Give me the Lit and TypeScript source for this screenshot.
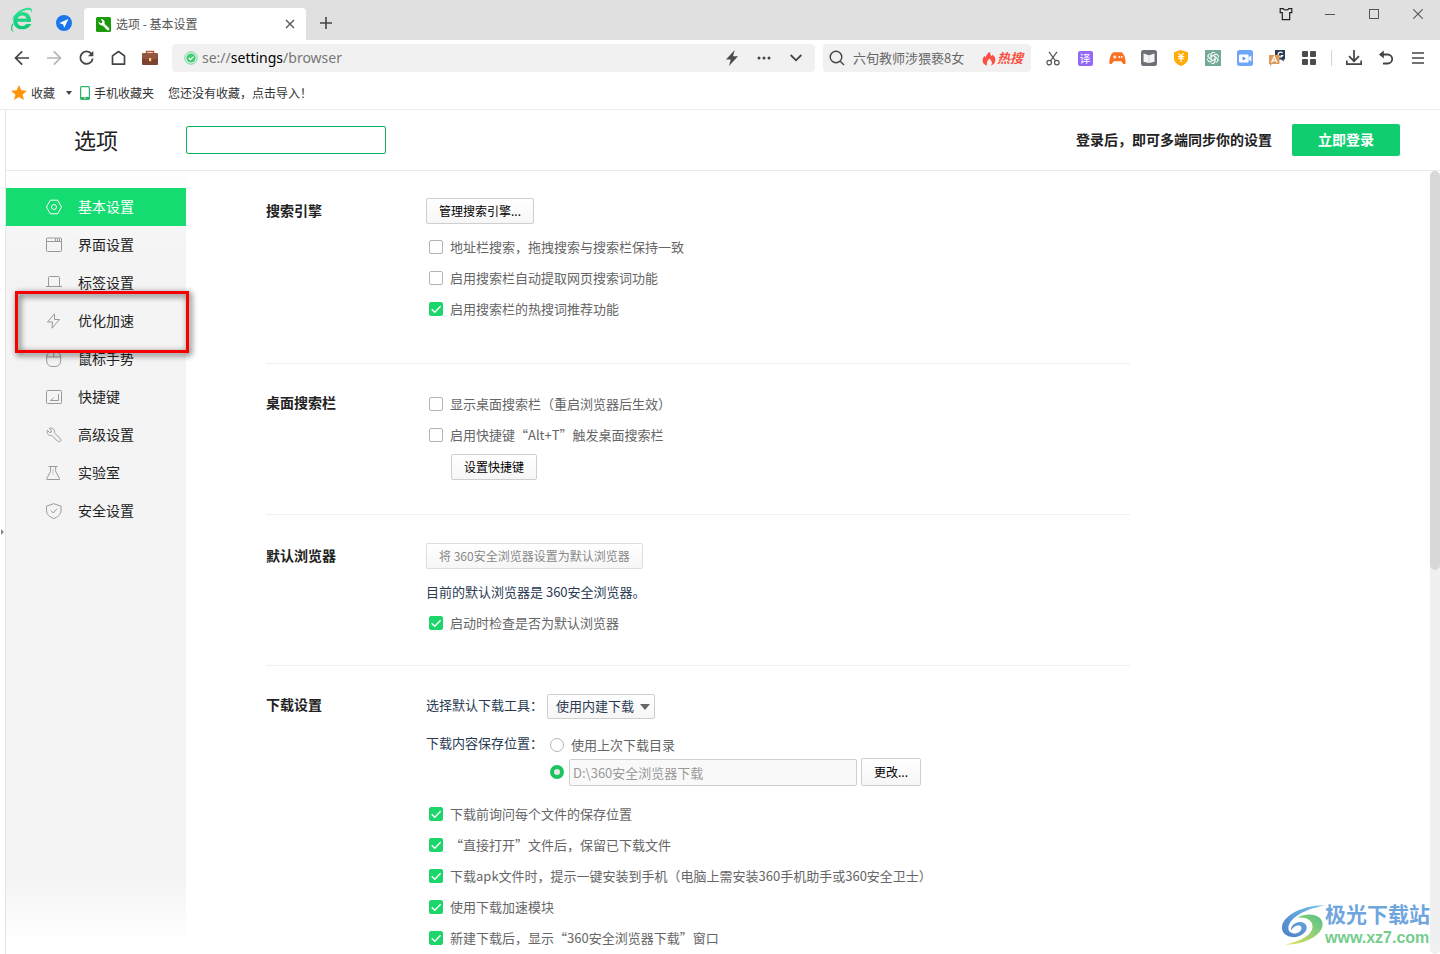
import { LitElement, html, css, svg, nothing } from "lit";
import { customElement, property } from "lit/decorators.js";
import { classMap } from "lit/directives/class-map.js";

const icon = (w: number, h: number, body: unknown, box = `0 0 ${w} ${h}`) =>
  html`<svg width=${w} height=${h} viewBox=${box} fill="none" aria-hidden="true">${body}</svg>`;

const logo = icon(24, 26, svg`
  <defs><linearGradient id="lg" x1="0" y1="0" x2="0" y2="1"><stop offset="0" stop-color="#25dd8b"/><stop offset="1" stop-color="#0cc877"/></linearGradient></defs>
  <path d="M20.800 13.200H6.600" stroke="#1bd47f" stroke-width="3.200"/>
  <path d="M20.900 14.800C21.600 8.600 17.600 5 12.200 5C6.800 5 3.300 8.800 3.300 13.700C3.300 18.800 7 22.300 12.200 22.300C16.400 22.300 19.800 20.300 21.300 17H16.400C15.400 18.300 14 18.900 12.300 18.900C9.400 18.900 7.300 16.900 7.100 13.900C7.200 10.600 9.300 8.500 12.300 8.500C15 8.500 16.700 10.200 16.900 12.500L17 14.800Z" fill="url(#lg)"/>
  <path d="M1.400 13.200C4 7 11 1.300 18 .8C21.500 .6 22.900 2.600 21.600 6.200C21.700 3.600 20.500 2.300 17.800 2.700C11.500 3.600 5.500 8 1.400 13.200Z" fill="#2bdf92"/>
  <path d="M2.300 16.500C.3 20.800.6 24.500 4 24.900C1.500 22.900 1.900 19.700 3.500 17Z" fill="#0cc877"/>`);

const plane = icon(16, 16, svg`<circle cx="8" cy="8" r="8" fill="#1b76ec"/><path d="M12.400 4L3.300 7.900L7 9.200L8.300 12.800Z" fill="#fff"/>`);

const wrenchTab = icon(15, 15, svg`<rect width="15" height="15" rx="1.500" fill="#1b9a0b"/>
  <path d="M7.300 7.300L12 12" stroke="#fff" stroke-width="2.600" stroke-linecap="round"/>
  <path d="M2.600 4.500C2.300 7.200 4.600 9 7 8.200L8.600 6.600C9.300 4.300 7.300 2 4.700 2.400L6.400 4.300L5.900 5.900L4.400 6.300Z" fill="#fff"/>`);

const close = icon(10, 10, svg`<path d="M1 1L9 9M9 1L1 9" stroke="#555" stroke-width="1.400"/>`);
const plus = icon(12, 12, svg`<path d="M6 0V12M0 6H12" stroke="#444" stroke-width="1.600"/>`);
const shirt = icon(14, 14, svg`<path d="M1.200 1.700H4.300C5 3.300 9 3.300 9.700 1.700H12.800V5.600H10.700V12.700H3.300V5.600H1.200Z" stroke="#222" stroke-width="1.200"/>`);
const minimise = icon(10, 10, svg`<path d="M0 5.500H10" stroke="#555"/>`);
const maximise = icon(10, 10, svg`<rect x=".5" y=".5" width="9" height="9" stroke="#555"/>`);
const winClose = icon(10, 10, svg`<path d="M.3 .3L9.700 9.700M9.700 .3L.3 9.700" stroke="#555" stroke-width="1.100"/>`);

const back = icon(16, 16, svg`<path d="M15 8H2M8.200 1.300L1.500 8L8.200 14.700" stroke="#444" stroke-width="1.700"/>`);
const forward = icon(16, 16, svg`<path d="M1 8H14M7.800 1.300L14.500 8L7.800 14.700" stroke="#b5b5b5" stroke-width="1.700"/>`);
const reload = icon(16, 16, svg`<path d="M13.500 3.900A6.200 6.200 0 1 0 14.700 8.600" stroke="#444" stroke-width="1.800"/><path d="M15.300 1V6.300H9.900Z" fill="#444"/>`);
const home = icon(16, 16, svg`<path d="M2.500 14.200V5.900L8.500 1.500L14.500 5.900V14.200Z" stroke="#444" stroke-width="1.700" stroke-linejoin="round"/>`);
const briefcase = icon(18, 16, svg`<path d="M5.500 4V1.500H12.500V4" stroke="#b5583a" stroke-width="1.500"/>
  <rect x="1" y="3.200" width="16" height="11.800" rx="1" fill="#7e4330"/><path d="M1 4.200Q1 3.200 2 3.200H16Q17 3.200 17 4.200V8.400Q9 10.400 1 8.400Z" fill="#95543d"/><rect x="8" y="8" width="2.200" height="3.200" fill="#f3d774"/>`);
const secure = icon(14, 14, svg`<circle cx="7" cy="7" r="6.200" stroke="#6fd596" stroke-width="1"/><circle cx="7" cy="7" r="4.600" fill="#3fce76"/><path d="M4.700 7L6.500 8.700L9.500 5.600" stroke="#fff" stroke-width="1.300"/>`);
const bolt = icon(14, 16, svg`<path d="M9.700 0L1 9.500H5.800L4 16L13 6.200H8Z" fill="#4b4b4b"/>`);
const dots = icon(14, 4, svg`<circle cx="2" cy="2" r="1.500" fill="#444"/><circle cx="7" cy="2" r="1.500" fill="#444"/><circle cx="12" cy="2" r="1.500" fill="#444"/>`);
const chevron = icon(12, 8, svg`<path d="M.7 1L6 6.300L11.300 1" stroke="#444" stroke-width="1.800"/>`);
const magnifier = icon(16, 16, svg`<circle cx="7" cy="7" r="5.800" stroke="#444" stroke-width="1.400"/><path d="M11.200 11.200L15 15" stroke="#444" stroke-width="1.400"/>`);
const flame = icon(14, 15, svg`<path d="M5.200 14.500C1.800 13.900.3 11.600.6 8.800C.8 7 1.800 5.900 2.700 4.800C2.800 5.700 3.100 6.200 3.700 6.500C4.200 4 5.800 1.800 8.200 .7C7.800 2.900 8.500 4 9.700 5.100C10.200 4.800 10.600 4.300 10.700 3.600C12.600 5.500 13.500 7.300 13.300 9.500C13.100 12.100 11.500 14 8.900 14.500C10.200 13 10.300 11.400 9.300 10C8.900 9.300 8.100 8.700 8 7.500C6 8.600 4.300 11.100 5.200 14.500Z" fill="#fb5144"/>`);

const scissors = icon(14, 15, svg`<g stroke="#555" stroke-width="1.200"><circle cx="3.200" cy="11.600" r="2.300"/><circle cx="10.800" cy="11.600" r="2.300"/><path d="M3 .8L9.500 9.800M11 .8L4.500 9.800"/></g>`);
const gamepad = icon(17, 14, svg`<path d="M4.500 1.200H12.500C15.400 2.700 16.900 8.500 16.600 12.600C15.200 14 13.300 12.300 12.300 10.200H4.700C3.700 12.300 1.800 14 .4 12.600C.1 8.500 1.600 2.700 4.500 1.200Z" fill="#fa6f20"/><path d="M5.800 4.200V7.800M4 6H7.600" stroke="#fff" stroke-width="1.100"/><circle cx="10.300" cy="6" r=".9" fill="#fff"/><circle cx="12.700" cy="6" r=".9" fill="#fff"/>`);
const book = icon(16, 16, svg`<rect width="16" height="16" rx="2.500" fill="#6e7077"/><path d="M2.500 3.500L7.900 5.200V13L2.500 11.800ZM8.100 5.200L13.500 3.500V11.800L8.100 13Z" fill="#f5f5f5"/>`);
const yenShield = icon(16, 16, svg`<path d="M8 0L15 2.300V8.500C15 12 11.600 14.500 8 16C4.400 14.500 1 12 1 8.500V2.300Z" fill="#ffab08"/><path d="M5.500 3.300L8 6M10.500 3.300L8 6M8 5.600V12M4.800 6.600H11.200M5.400 9L8 8.200L10.600 9" stroke="#fff" stroke-width="1.200"/>`);
const knot = icon(16, 16, svg`<rect width="16" height="16" fill="#74a99a"/><g stroke="#fff" stroke-width=".8">
  ${[0, 60, 120, 180, 240, 300].map((a) => svg`<path transform="rotate(${a} 8 8)" d="M5.800 9.300V4.700A2.500 2.500 0 0 1 10.300 3.300M7.200 6.400L10 4.800A2.500 2.500 0 0 1 13.300 5.800"/>`)}</g>`);
const video = icon(16, 16, svg`<rect width="16" height="16" rx="2.500" fill="#6ea6fb"/><rect x="2" y="4.500" width="9.600" height="8" rx="1.200" fill="#fff"/><path d="M11.500 7.600L14.300 5.500V11.500L11.500 9.500Z" fill="#fff"/><path d="M5.600 6.500L9 8.500L5.600 10.500Z" fill="#4e8bf5"/>`);
const translate = icon(16, 16, svg`<path d="M6 0H16V9.500H14.500L15 11.500L12 9.500H6Z" fill="#2b3c55"/><path d="M13.600 3.300A2.400 2.400 0 1 0 13.700 5.500H11.700" stroke="#fff" stroke-width="1.200"/><path d="M0 5H10.500V14H3L1 16V14H0Z" fill="#dc9b5c"/><path d="M2.500 12.500L5.300 6.500L8 12.500M3.600 10.600H7" stroke="#fff" stroke-width="1.200"/>`);
const apps = icon(14, 14, svg`<g fill="#4b4b4b"><rect width="6" height="6" rx="1"/><rect x="8" width="6" height="6" rx="1"/><rect y="8" width="6" height="6" rx="1"/><rect x="8" y="8" width="6" height="6" rx="1"/></g>`);
const download = icon(16, 16, svg`<path d="M8 0V11M3 6.200L8 11.200L13 6.200M.8 10.500V14.200H15.200V10.500" stroke="#444" stroke-width="1.700"/>`);
const undo = icon(16, 16, svg`<path d="M2 4.500H9.700A4.500 4.500 0 0 1 9.700 13.500H5" stroke="#444" stroke-width="1.800"/><path d="M1 4.500L5.800 .6V8.400Z" fill="#444"/>`);
const menu = icon(12, 12, svg`<path d="M0 1H12M0 6H12M0 11H12" stroke="#444" stroke-width="1.700"/>`);

const star = icon(16, 15, svg`<path d="M8 0L10.300 5.300L16 5.700L11.600 9.400L13 15L8 12L3 15L4.400 9.400L0 5.700L5.700 5.300Z" fill="#ff9408"/>`);
const caret = icon(6, 4, svg`<path d="M0 0H6L3 4Z" fill="#444"/>`);
const phone = icon(10, 14, svg`<rect x=".6" y=".6" width="8.800" height="12.800" rx="1" stroke="#2fb56a" stroke-width="1.200"/><path d="M1 11H9V13H1Z" fill="#2fb56a"/><rect x="4.200" y="11.600" width="1.600" height="1" fill="#fff"/>`);

const outline = (body: unknown) => icon(16, 16, svg`<g stroke="currentColor">${body}</g>`);
const NAV = [
  { text: "基本设置", icon: outline(svg`<path d="M4.300 1.200H11.700L15.500 8L11.700 14.800H4.300L.5 8Z"/><circle cx="8" cy="8" r="2.500"/>`) },
  { text: "界面设置", icon: outline(svg`<rect x=".5" y="1" width="15" height="13.500" rx="1"/><path d="M.5 4.500H15.500M9.500 1.500V4M11.500 1.500V4M13.500 1.500V4"/>`) },
  { text: "标签设置", icon: outline(svg`<path d="M0 11.500H16M2.500 11.500V2.500Q2.500 1.500 3.500 1.500H12.500Q13.500 1.500 13.500 2.500V11.500"/>`) },
  { text: "优化加速", icon: outline(svg`<path d="M8.500 .8L1.500 9H6.500L6 15.200L13.500 6.500H8.500Z" stroke-linejoin="round"/>`), marked: true },
  { text: "鼠标手势", icon: outline(svg`<rect x=".7" y=".5" width="14" height="15" rx="5.500"/><path d="M.7 6H14.700M7.700 .5V6"/>`) },
  { text: "快捷键", icon: outline(svg`<rect x=".5" y="1.500" width="15" height="13" rx="1"/><path d="M12.500 5V11.500H4.500L7.500 9"/>`) },
  { text: "高级设置", icon: outline(svg`<path d="M3.200 1.400L5.500 3.700L5.200 5.200L3.700 5.500L1.300 3.200C.2 6.500 2.500 9.200 5.800 8.400L11.500 14.100C12.400 15 13.700 14.900 14.400 14.200C15.100 13.500 15.100 12.300 14.200 11.500L8.400 5.800C9.200 2.500 6.500.3 3.200 1.400Z"/>`) },
  { text: "实验室", icon: outline(svg`<path d="M2.500 1.500H11.500M4.500 1.500V6.500L.8 13.500V14.500H13.500V13.500L9.700 6.500V1.500"/><path d="M7 4.500V9.500" stroke-dasharray="1 1"/>`) },
  { text: "安全设置", icon: outline(svg`<path d="M7.700 .7L15 3.200V7.500C15 11.500 11.500 14.300 7.700 15.500C4 14.300.5 11.500.5 7.500V3.200Z"/><path d="M4.800 7.500L7.200 10L11 5.800"/>`) },
];

@customElement("browser-chrome")
class BrowserChrome extends LitElement {
  static styles = css`
    :host { display: block; }
    svg { display: block; flex: none; }
    button { border: 0; padding: 0; background: none; font: inherit; color: inherit; }
    .tabs { display: flex; height: 40px; background: #e0e0e0; font-size: 12px; color: #555; }
    .brand { width: 24px; padding: 7px 10px; }
    .quick { width: 40px; display: grid; place-items: center; padding-top: 6px; }
    .tab { width: 222px; margin-top: 8px; box-sizing: border-box; padding: 0 11px 0 12px; display: flex; align-items: center; gap: 5px; background: #fff; border-radius: 4px 4px 0 0; }
    .tab .name { flex: 1; padding-bottom: 2px; }
    .plus { width: 40px; display: grid; place-items: center; padding-top: 6px; }
    .window { margin-left: auto; display: flex; height: 28px; }
    .window button { width: 44px; display: grid; place-items: center; }
    .bar { display: flex; align-items: center; height: 36px; padding: 0 6px; }
    .tool { width: 32px; height: 28px; display: grid; place-items: center; flex: none; }
    .address { flex: 1; min-width: 0; height: 28px; margin: 0 8px 0 6px; padding: 0 3px 0 12px; display: flex; align-items: center; background: #f1f1f1; border-radius: 4px; box-sizing: border-box; }
    .url { flex: 1; padding-left: 4px; font: 14px/20px "Noto Sans", "Noto Sans CJK SC", sans-serif; color: #777; }
    .url b { font-weight: 400; color: #000; }
    .search { width: 208px; height: 28px; margin-right: 6px; padding: 0 8px 0 6px; display: flex; align-items: center; gap: 8px; background: #f1f1f1; border-radius: 4px; box-sizing: border-box; }
    .search input { flex: 1; min-width: 0; border: 0; padding: 0 0 2px; background: none; outline: 0; font: inherit; font-size: 13px; color: #666; }
    .search input::placeholder { color: #666; opacity: 1; }
    .hot { display: flex; align-items: center; gap: 1px; color: #fb5144; font-size: 13px; font-weight: 700; font-style: italic; }
    .hot span { padding-bottom: 2px; }
    .yi { width: 15px; height: 15px; border-radius: 2px; background: #9469f8; color: #fff; font-size: 11px; line-height: 15px; text-align: center; }
    .sep { width: 1px; height: 16px; margin: 0 6px; background: #d5d5d5; }
    .marks { display: flex; align-items: center; height: 33px; padding-left: 11px; font-size: 12px; color: #333; border-bottom: 1px solid #ececec; }
    .marks button { display: flex; align-items: center; gap: 4px; }
    .marks .fav { margin-right: 11px; }
    .marks .mobile { margin: 0 14px 0 8px; }
  `;

  tool(label: string, glyph: unknown) {
    return html`<button class="tool" aria-label=${label}>${glyph}</button>`;
  }

  render() {
    return html`
      <div class="tabs">
        <div class="brand">${logo}</div>
        <button class="quick" aria-label="导航">${plane}</button>
        <div class="tab">${wrenchTab}<span class="name">选项 - 基本设置</span><button aria-label="关闭标签">${close}</button></div>
        <button class="plus" aria-label="新标签">${plus}</button>
        <div class="window">
          <button aria-label="皮肤">${shirt}</button><button aria-label="最小化">${minimise}</button>
          <button aria-label="最大化">${maximise}</button><button aria-label="关闭">${winClose}</button>
        </div>
      </div>
      <div class="bar">
        ${this.tool("后退", back)}${this.tool("前进", forward)}${this.tool("刷新", reload)}${this.tool("主页", home)}${this.tool("工具箱", briefcase)}
        <div class="address">${secure}<span class="url">se://<b>settings</b>/browser</span>
          ${this.tool("极速模式", bolt)}${this.tool("更多", dots)}${this.tool("展开", chevron)}</div>
        <div class="search">${magnifier}<input aria-label="搜索" placeholder="六旬教师涉猥亵8女" /><span class="hot">${flame}<span>热搜</span></span></div>
        ${this.tool("截图", scissors)}${this.tool("翻译", html`<span class="yi">译</span>`)}${this.tool("游戏", gamepad)}${this.tool("阅读", book)}
        ${this.tool("优惠", yenShield)}${this.tool("助手", knot)}${this.tool("录屏", video)}${this.tool("双语", translate)}${this.tool("扩展", apps)}
        <span class="sep"></span>
        ${this.tool("下载", download)}${this.tool("恢复", undo)}${this.tool("菜单", menu)}
      </div>
      <div class="marks">
        <button class="fav">${star}收藏</button>${caret}
        <button class="mobile">${phone}手机收藏夹</button><button>您还没有收藏，点击导入！</button>
      </div>`;
  }
}

@customElement("settings-nav")
class SettingsNav extends LitElement {
  static styles = css`
    :host { display: block; width: 180px; padding-top: 17px; box-sizing: border-box;
      background: linear-gradient(#fff, #f4f4f4 75px, #f4f4f4 calc(100% - 76px), #fff calc(100% - 8px)); }
    ul { list-style: none; margin: 0; padding: 0; }
    li { position: relative; }
    a { display: flex; align-items: center; gap: 16px; height: 38px; padding-left: 40px; font-size: 14px; color: #222; text-decoration: none; }
    a span { padding-bottom: 2px; }
    svg { color: #999; }
    .active { background: #14dc71; color: #fff; }
    .active svg { color: #fff; }
    .mark { position: absolute; z-index: 1; inset: -11px -3px -13px 9px; border: 3px solid #f80000; filter: drop-shadow(2px 2px 3px rgba(0, 0, 0, .75)); pointer-events: none; }
  `;
  render() {
    return html`<nav><ul>${NAV.map((n, i) => html`<li>
      <a href="#" class=${classMap({ active: i === 0 })}>${n.icon}<span>${n.text}</span></a>
      ${n.marked ? html`<div class="mark"></div>` : nothing}</li>`)}</ul></nav>`;
  }
}

@customElement("check-row")
class CheckRow extends LitElement {
  @property() text = "";
  @property({ type: Boolean }) on = false;
  static styles = css`
    :host { display: block; }
    label { display: flex; align-items: center; gap: 7px; height: 31px; padding-left: 3px; font-size: 13px; color: #666; white-space: nowrap; }
    .text { padding-bottom: 1px; }
    .box { display: grid; }
    .box > * { grid-area: 1 / 1; }
    input { appearance: none; width: 14px; height: 14px; margin: 0; border: 1px solid #b4b4b4; border-radius: 2px; background: #fff; }
    input:checked { background: #1cd66c; border-color: #1cd66c; }
    svg { pointer-events: none; }
  `;
  render() {
    return html`<label><span class="box"><input type="checkbox" .checked=${this.on} />
      ${this.on ? icon(14, 14, svg`<path d="M2.700 7.200L5.800 10.200L11.600 4.200" stroke="#fff" stroke-width="1.400"/>`) : nothing}</span><span class="text">${this.text}</span></label>`;
  }
}

@customElement("app-root")
class AppRoot extends LitElement {
  static styles = css`
    :host { display: flex; flex-direction: column; height: 100vh; position: relative; overflow: hidden; background: #fff;
      font-family: "Noto Sans CJK SC", sans-serif; text-spacing-trim: space-all; }
    button, input, select { font: inherit; }
    .page { flex: 1; min-height: 0; display: flex; }
    .edge { width: 5px; flex: none; display: flex; align-items: center; border-right: 1px solid #e6e6e6; }
    .edge button { border: 0; padding: 0; background: none; display: flex; }
    .view { flex: 1; min-width: 0; display: flex; flex-direction: column; }
    .head { display: flex; align-items: center; height: 60px; padding: 0 40px 0 68px; border-bottom: 1px solid #e9e9e9; }
    h1 { margin: 0; width: 112px; padding-bottom: 2px; font-size: 22px; font-weight: 400; color: #222; }
    .find { width: 200px; height: 28px; box-sizing: border-box; border: 1px solid #0db35c; border-radius: 2px; background: #fff; padding: 0 6px; outline: 0; }
    .sync { margin-left: auto; margin-right: 20px; padding-bottom: 2px; font-size: 14px; font-weight: 700; color: #222; }
    .login { width: 108px; height: 32px; padding: 0 0 2px; border: 0; border-radius: 2px; background: #10ce70; color: #fff; font-size: 14px; font-weight: 700; }
    .body { flex: 1; min-height: 0; display: flex; }
    main { flex: 1; min-width: 0; overflow: hidden; padding-left: 80px; }
    .track { width: 10px; border-radius: 5px; background: #f0f0f0; }
    .thumb { height: 51%; border-radius: 5px; background: #d8d8d8; }
    section { max-width: 864px; display: flex; padding: 28px 0 27px; border-bottom: 1px solid #f0f0f0; }
    section.search { padding: 27px 0 39px; }
    section.desktop { padding: 24px 0 34px; }
    h2 { margin: 0; width: 160px; flex: none; font-size: 14px; line-height: 24px; font-weight: 700; color: #222; }
    .desktop h2 { line-height: 29px; }
    .download h2 { line-height: 21px; }
    .btn { display: block; height: 26px; padding: 0 12px; border: 1px solid #cfcfcf; border-radius: 2px; background: linear-gradient(#fff, #f6f6f6); font-size: 12px; line-height: 24px; color: #000; white-space: nowrap; }
    .btn:disabled { color: #888; border-color: #dedede; }
    .search .btn, .default .btn { margin-bottom: 7px; }
    .desktop .btn { margin: 4px 0 0 25px; }
    .note { margin: 0; font-size: 13px; line-height: 31px; color: #2a3b52; }
    .form { display: grid; grid-template-columns: auto 1fr; column-gap: 4px; row-gap: 13px; margin-bottom: 12px; font-size: 13px; color: #2a3b52; }
    .form .label { line-height: 22px; }
    .drop { display: grid; width: 108px; align-items: center; }
    .drop > * { grid-area: 1 / 1; }
    .drop svg { justify-self: end; margin-right: 5px; pointer-events: none; }
    select { appearance: none; height: 25px; padding: 0 8px 2px; border: 1px solid #cfcfcf; border-radius: 2px; background: linear-gradient(#fff, #f6f6f6); font-size: 13px; color: #2a3b52; }
    .radio { display: flex; align-items: center; gap: 7px; height: 26px; padding-left: 3px; color: #666; }
    .radio span { padding-bottom: 2px; }
    .radio input { appearance: none; width: 14px; height: 14px; margin: 0; border: 1px solid #b4b4b4; border-radius: 50%; background: #fff; }
    .radio input:checked { border: 4px solid #1bc45f; background: #e8e8e8; }
    .place { display: flex; align-items: center; gap: 4px; }
    .place .radio { padding-right: 1px; }
    .path { width: 288px; height: 27px; box-sizing: border-box; padding: 0 3px; border: 1px solid #cfcfcf; border-radius: 2px; background: #f9f9f9; color: #999; font-size: 13px; }
    .place .btn { height: 28px; }
    .stamp { position: absolute; right: 10px; bottom: 7px; display: flex; align-items: center; }
    .stamp div { display: flex; flex-direction: column; }
    .cn { font-size: 21px; line-height: 31px; font-weight: 700; color: #6fa6dd; }
    .en { font: 700 16px/18px "Liberation Sans", Arial, sans-serif; color: #74cd8d; }
    .stamp svg { margin-top: 4px; }
  `;

  render() {
    return html`
      <browser-chrome></browser-chrome>
      <div class="page">
        <div class="edge"><button aria-label="展开侧栏">${icon(4, 6, svg`<path d="M1 0L4 3L1 6Z" fill="#888"/>`)}</button></div>
        <div class="view">
          <header class="head">
            <h1>选项</h1><input class="find" aria-label="搜索设置" />
            <span class="sync">登录后，即可多端同步你的设置</span><button class="login">立即登录</button>
          </header>
          <div class="body">
            <settings-nav></settings-nav>
            <main>
              <section class="search"><h2>搜索引擎</h2><div>
                <button class="btn">管理搜索引擎...</button>
                <check-row text="地址栏搜索，拖拽搜索与搜索栏保持一致"></check-row>
                <check-row text="启用搜索栏自动提取网页搜索词功能"></check-row>
                <check-row on text="启用搜索栏的热搜词推荐功能"></check-row>
              </div></section>
              <section class="desktop"><h2>桌面搜索栏</h2><div>
                <check-row text="显示桌面搜索栏（重启浏览器后生效）"></check-row>
                <check-row text="启用快捷键“Alt+T”触发桌面搜索栏"></check-row>
                <button class="btn">设置快捷键</button>
              </div></section>
              <section class="default"><h2>默认浏览器</h2><div>
                <button class="btn" disabled>将 360安全浏览器设置为默认浏览器</button>
                <p class="note">目前的默认浏览器是 360安全浏览器。</p>
                <check-row on text="启动时检查是否为默认浏览器"></check-row>
              </div></section>
              <section class="download"><h2>下载设置</h2><div>
                <div class="form">
                  <label class="label" for="tool">选择默认下载工具：</label>
                  <div class="drop"><select id="tool"><option>使用内建下载</option></select>${icon(10, 6, svg`<path d="M0 0H10L5 6Z" fill="#666"/>`)}</div>
                  <span class="label">下载内容保存位置：</span>
                  <div>
                    <label class="radio"><input type="radio" name="dir" /><span>使用上次下载目录</span></label>
                    <div class="place"><span class="radio"><input type="radio" name="dir" aria-label="指定目录" checked /></span>
                      <input class="path" aria-label="下载目录" value="D:\\360安全浏览器下载" disabled /><button class="btn">更改...</button></div>
                  </div>
                </div>
                <check-row on text="下载前询问每个文件的保存位置"></check-row>
                <check-row on text="“直接打开”文件后，保留已下载文件"></check-row>
                <check-row on text="下载apk文件时，提示一键安装到手机（电脑上需安装360手机助手或360安全卫士）"></check-row>
                <check-row on text="使用下载加速模块"></check-row>
                <check-row on text="新建下载后，显示“360安全浏览器下载”窗口"></check-row>
              </div></section>
            </main>
            <div class="track"><div class="thumb"></div></div>
          </div>
        </div>
      </div>
      <div class="stamp">
        ${icon(44, 40, svg`
          <defs><linearGradient id="sb" x1="0" y1="1" x2="1" y2="0"><stop offset="0" stop-color="#4f7fc6"/><stop offset="1" stop-color="#6fc3ee"/></linearGradient>
          <linearGradient id="sg" x1="0" y1="1" x2="1" y2="0"><stop offset="0" stop-color="#e6e35a"/><stop offset="1" stop-color="#52c08a"/></linearGradient></defs>
          <path d="M44 .5C28 -.5 6 7 1.500 19C-1.500 29 8 34 17 31.500C27 28.500 29 18.500 20 17C14 16.500 9.500 21 10 25.500C12 21.500 16.500 19.500 19.500 21C22.500 24 18 29 12.500 28.500C5 27.500 6 19 13 13C21 6.500 32 2.500 44 .5Z" fill="url(#sb)"/>
          <path d="M16 12.500C27 7 40 9.500 41.500 18C43 29 25 40 4 39.500C20 36.500 31 29.500 31.500 22.500C32 14.500 25 12 16 12.500Z" fill="url(#sg)"/>`)}
        <div><span class="cn">极光下载站</span><span class="en">www.xz7.com</span></div>
      </div>`;
  }
}
